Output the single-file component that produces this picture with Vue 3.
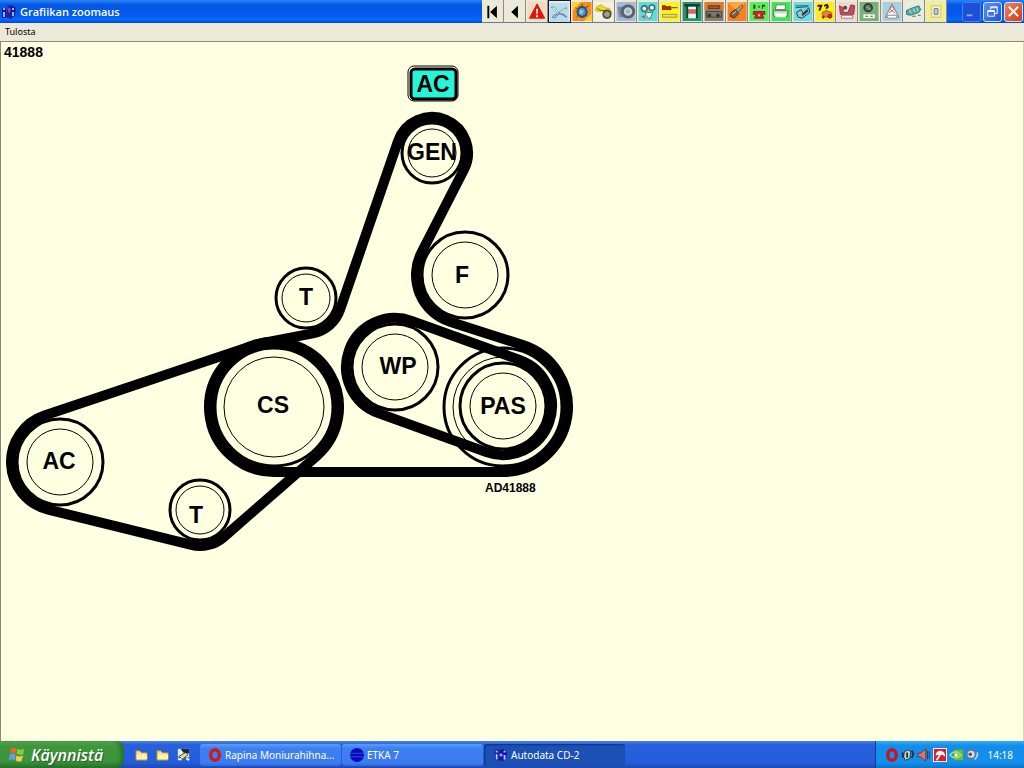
<script setup>
import { ref } from 'vue'

const pulleys = {
  gen: { label: 'GEN', x: 432, y: 153, r: 31, inner: 24, tx: 432, ty: 160 },
  f: { label: 'F', x: 465, y: 275, r: 44, inner: 33, tx: 462, ty: 283 },
  t1: { label: 'T', x: 306, y: 298, r: 31, inner: 24, tx: 306, ty: 305 },
  cs: { label: 'CS', x: 274, y: 407, r: 60, inner: 50, tx: 273, ty: 413 },
  wp: { label: 'WP', x: 395, y: 367, r: 44, inner: 33, tx: 398, ty: 374 },
  pasOuter: { label: '', x: 503, y: 407, r: 60, inner: 50 },
  pas: { label: 'PAS', x: 503, y: 406, r: 44, inner: 33, tx: 503, ty: 414 },
  ac: { label: 'AC', x: 60, y: 462, r: 44, inner: 33, tx: 59, ty: 469 },
  t2: { label: 'T', x: 200, y: 510, r: 31, inner: 24, tx: 196, ty: 523 }
}

// 1 = belt runs clockwise round the pulley, -1 = counter-clockwise
const routes = [
  [['gen', 1], ['f', -1], ['pasOuter', 1], ['cs', 1], ['t1', -1]],
  [['ac', 1], ['cs', 1], ['t2', 1]],
  [['wp', 1], ['pas', 1]]
]

function beltPath(route) {
  const nodes = route.map(([id, dir]) => {
    const p = pulleys[id]
    return { x: p.x, y: p.y, r: p.r + 5, dir }
  })
  const count = nodes.length
  const spans = nodes.map((from, i) => {
    const to = nodes[(i + 1) % count]
    const dx = to.x - from.x
    const dy = to.y - from.y
    const diff = from.dir * from.r - to.dir * to.r
    const angle = Math.atan2(dy, dx) + Math.asin(diff / Math.hypot(dx, dy))
    return { angle, start: touch(from, angle), end: touch(to, angle) }
  })
  let d = `M${spans[0].start}`
  spans.forEach((span, i) => {
    const next = spans[(i + 1) % count]
    const node = nodes[(i + 1) % count]
    const full = Math.PI * 2
    const turn = ((node.dir * (next.angle - span.angle)) % full + full) % full
    const large = turn > Math.PI ? 1 : 0
    const sweep = node.dir > 0 ? 1 : 0
    d += ` L${span.end} A${node.r} ${node.r} 0 ${large} ${sweep} ${next.start}`
  })
  return d + 'Z'
}

function touch(node, angle) {
  const r = node.dir * node.r
  return `${(node.x + r * Math.sin(angle)).toFixed(2)} ${(node.y - r * Math.cos(angle)).toFixed(2)}`
}

const belts = routes.map(beltPath)

const active = ref('Kytkentäkaaviot')

const tools = [
  { name: 'Ensimmäinen', bg: '#ece9d8', shapes: [{ d: 'M4 4h2v13H4z M14 4v13L7 10.5z', fill: '#000' }] },
  { name: 'Edellinen', bg: '#ece9d8', shapes: [{ d: 'M13 4v13L6 10.5z', fill: '#000' }] },
  { name: 'Varoitus', bg: '#f0dcc0', shapes: [
    { d: 'M10 2l8 15H2z', fill: '#e81010', stroke: '#b02010' },
    { d: 'M9 7h2l-.4 6h-1.2z M9 14h2v2H9z', fill: '#fff' }
  ] },
  { name: 'Kytkentäkaaviot', bg: '#b8dcec', shapes: [
    { d: 'M2 4l4 2 3 5 5 1 4 3 M18 5l-6 4-5 4-4 2', stroke: '#6c94a8', w: 2 },
    { d: 'M3 5l3 1 3 5 M11 10l6-4', stroke: '#f4ffff' },
    { d: 'M5 12l3 1-2 3-3-1z M13 12l4 2', fill: '#a8c0cc', stroke: '#7088a0' }
  ] },
  { name: 'Säätöarvot', bg: '#f88c18', shapes: [
    { d: 'M0 0h9L0 9z M20 20v-8l-8 8z', fill: '#ffd430' },
    { d: 'M7 6l3-1 3 1 2 4-1 4-4 2-4-2-1-4z', fill: '#3c98d0', stroke: '#285078', w: 2 },
    { d: 'M8 8l4 1-2 4-3-1z', fill: '#90c8e4' },
    { d: 'M3 6l3 2 M14 6l3-2 M10 2v3 M4 16l2-2', stroke: '#7c3820' }
  ] },
  { name: 'Jakohihna', bg: '#f4f0e4', shapes: [
    { d: 'M2 5l5-2 4 3 5 1 2 4-5 1-4-3-5 1-3-1z', fill: '#f4dc18', stroke: '#c8b010' },
    { d: 'M13 9a4 4 0 1 0 .1 0z', fill: '#a0a08c', stroke: '#505040', w: 2 },
    { d: 'M3 7l4 2 4 0', stroke: '#605818' }
  ] },
  { name: 'Renkaat', bg: '#a8b8d8', shapes: [
    { d: 'M1 5h8l3 2v9H3z', fill: '#7484a4' },
    { d: 'M12 4a6 6 0 1 0 .1 0z', fill: '#c4d0dc', stroke: '#58606c', w: 3 },
    { d: 'M12 8a2 2 0 1 0 .1 0z', fill: '#a0b0c0' }
  ] },
  { name: 'Hihnat', bg: '#60dcd8', shapes: [
    { d: 'M6 4a3 3 0 1 0 .1 0z M14 3a3 3 0 1 0 .1 0z', fill: '#f0f4ec', stroke: '#407878', w: 2 },
    { d: 'M7 11h8l-3 7-4-3z', fill: '#e4f4ec', stroke: '#407878' },
    { d: 'M3 15l3-1 1 4z', fill: '#e83030' }
  ] },
  { name: 'Sytytystulpat', bg: '#fcf420', shapes: [
    { d: 'M2 4h3v4H2z M6 5h5v3H6z M12 6h6', fill: '#d02818', stroke: '#802010' },
    { d: 'M2 13h15v3H2z', fill: '#e4d89c', stroke: '#a09428' }
  ] },
  { name: 'Nosturi', bg: '#249470', shapes: [
    { d: 'M2 2h16v3H2z M4 3h2v14H4z M14 3h2v14h-2z', fill: '#163c34' },
    { d: 'M6 5h8v3H6z M6 12h8v5H6z', fill: '#eef4e8' },
    { d: 'M6 8h8v4H6z', fill: '#e06060' }
  ] },
  { name: 'Ilmastointi', bg: '#8c8068', shapes: [
    { d: 'M0 0h20v8H0z', fill: '#e8782c' },
    { d: 'M4 4h12v3H4z', fill: '#8c6040', stroke: '#503820' },
    { d: 'M2 10h16v6H2z', fill: '#787870', stroke: '#444440' },
    { d: 'M5 12a2 2 0 1 0 .1 0z M14 12a2 2 0 1 0 .1 0z', fill: '#343434' }
  ] },
  { name: 'Anturit', bg: '#f88020', shapes: [
    { d: 'M0 0h20L8 8z', fill: '#f8a840' },
    { d: 'M3 12l5-4 4 4-5 5-4-2z', fill: '#786048', stroke: '#403428' },
    { d: 'M9 8l6-5 1 2-5 6z', fill: '#b0a494', stroke: '#605040' },
    { d: 'M5 13l4-3', stroke: '#e8d8b8' }
  ] },
  { name: 'Vikakoodit', bg: '#54f060', shapes: [
    { d: 'M4 3h2v4H4z M13 3h3v2h-2v2h-1z', fill: '#204820' },
    { d: 'M9 5h2', stroke: '#d82020', w: 2 },
    { d: 'M4 10h12v3h-3l2 4H5l2-4H4z', fill: '#d42424', stroke: '#a01818' },
    { d: 'M9 13h2v2H9z', fill: '#f8d8d0' }
  ] },
  { name: 'Tulostin', bg: '#38e854', shapes: [
    { d: 'M5 3h10l-1 5H4z', fill: '#fff', stroke: '#588058' },
    { d: 'M2 9h15v6H2z', fill: '#d0d8c8', stroke: '#508058' },
    { d: 'M4 12h11v4H4z', fill: '#fff' }
  ] },
  { name: 'Moottori', bg: '#70dce4', shapes: [
    { d: 'M2 4h14 M2 6l13-1', stroke: '#285464' },
    { d: 'M3 11l5-3 2 4 6-6 1 5-8 6-4-1z', fill: '#a4c4cc', stroke: '#183844' },
    { d: 'M9 14l6-5', stroke: '#183844', w: 2 }
  ] },
  { name: 'Vianhaku', bg: '#fcec24', shapes: [
    { d: 'M2 4h4L4 9 M9 4l3-1 1 2-2 2', stroke: '#28200c', w: 2 },
    { d: 'M7 11l4-2 6 2v4l-6 1-4-2z', fill: '#e4843c', stroke: '#b06020' },
    { d: 'M8 15a1 1 0 1 0 .1 0z M15 13a2 2 0 1 0 .1 0z', fill: '#d82020', stroke: '#802010' }
  ] },
  { name: 'Huolto', bg: '#ecd8d0', shapes: [
    { d: 'M2 4l4 2v5h5l3-8 4 1-1 9H3z', fill: '#c84c58', stroke: '#803c48' },
    { d: 'M8 4a2 2 0 1 0 .1 0z', fill: '#584048' },
    { d: 'M4 14h12v3H4z', fill: '#fff', stroke: '#a07078' }
  ] },
  { name: 'Jarrut', bg: '#78b078', shapes: [
    { d: 'M9 2a4 4 0 1 0 .1 0z', fill: '#687470', stroke: '#304038', w: 2 },
    { d: 'M7 5l5 3', stroke: '#a8b8a8' },
    { d: 'M4 13h12v4H4z', fill: '#f8fcf4' },
    { d: 'M6 15h3m2 0h3', stroke: '#506050' }
  ] },
  { name: 'Turvatyynyt', bg: '#a8d0e0', shapes: [
    { d: 'M10 2l7 14H3z', fill: '#f8f0f0', stroke: '#c05c68' },
    { d: 'M10 5a2 2 0 1 0 .1 0z M7 11l3-2 3 3', stroke: '#687888' },
    { d: 'M5 14h10v3H5z', fill: '#fff', stroke: '#789098' }
  ] },
  { name: 'Sähköosat', bg: '#e8ecdc', shapes: [
    { d: 'M2 9l4-2 9-3 2 4-2 3-9 3-4-1z', fill: '#54a8a8', stroke: '#387878' },
    { d: 'M5 8l2 4m2-5l2 4m2-5l1 4', stroke: '#d4ece4' },
    { d: 'M8 15h4m2-1h3', stroke: '#606c64' }
  ] },
  { name: 'Avaimet', bg: '#f4f080', shapes: [
    { d: 'M5 4h10v12H5z', fill: '#f0f0e0', stroke: '#c0c090' },
    { d: 'M8 7h4v6H8z', fill: '#c8c8c0', stroke: '#787870' }
  ] }
]

const tasks = [
  { name: 'Rapina Moniurahihna...', icon: 'opera' },
  { name: 'ETKA 7', icon: 'etka' },
  { name: 'Autodata CD-2', icon: 'autodata' }
]
const activeTask = ref('Autodata CD-2')
</script>

<template>
  <div class="desktop">
    <header class="titlebar">
      <svg class="app-icon" viewBox="0 0 16 16">
        <path d="M6 2l5-1 4 4-1 6-4 4-5-2z" fill="#2020a0" />
        <path d="M1 4h4v10H1z M10 3h4v9h-4z" fill="#101c98" />
        <path d="M2 4h2v2H2z M2 8h2v5H2z M11 4h2v2h-2z M11 8h2v4h-2z" fill="#90b4f4" />
        <path d="M6 3l4 2-2 5z" fill="#8448b0" />
      </svg>
      <h1>Grafiikan zoomaus</h1>
      <div class="toolbar">
        <button
          v-for="tool in tools"
          :key="tool.name"
          class="tool"
          :class="{ active: active === tool.name }"
          :aria-label="tool.name"
          @click="active = tool.name"
        >
          <svg viewBox="0 0 20 20">
            <rect width="20" height="20" :fill="tool.bg" />
            <path
              v-for="(s, i) in tool.shapes"
              :key="i"
              :d="s.d"
              :fill="s.fill || 'none'"
              :stroke="s.stroke || 'none'"
              :stroke-width="s.w || 1"
            />
          </svg>
        </button>
      </div>
      <div class="window-buttons">
        <button class="win dim" aria-label="Pienennä">
          <svg viewBox="0 0 18 18"><path d="M4 13h6" stroke="#8cacf4" stroke-width="2" /></svg>
        </button>
        <button class="win" aria-label="Palauta">
          <svg viewBox="0 0 18 18">
            <path d="M7 7V4h7v7h-3 M7 5h7" fill="none" stroke="#fff" />
            <path d="M4 8h7v6H4z M4 9h7" fill="none" stroke="#fff" />
          </svg>
        </button>
        <button class="win close" aria-label="Sulje">
          <svg viewBox="0 0 18 18"><path d="M4 4l10 10M14 4L4 14" stroke="#fff" stroke-width="2" /></svg>
        </button>
      </div>
    </header>

    <nav class="menubar">
      <button class="menu-item">Tulosta</button>
    </nav>

    <main class="content">
      <h2>41888</h2>
      <svg class="diagram" viewBox="0 63 600 500" width="600" height="500">
        <g fill="none" stroke="#000">
          <g v-for="(p, id) in pulleys" :key="id">
            <circle :cx="p.x" :cy="p.y" :r="p.r - 1" stroke-width="3" fill="#ffffe1" />
            <circle :cx="p.x" :cy="p.y" :r="p.inner" stroke-width="1" />
          </g>
          <path v-for="(d, i) in belts" :key="i" :d="d" stroke-width="10" />
        </g>
        <rect x="408" y="66" width="50" height="35" rx="6" fill="#ffffe1" stroke="#000" />
        <rect x="411" y="69" width="45" height="30" rx="4" fill="#28f4d8" stroke="#000" stroke-width="3" />
        <g class="labels">
          <text x="433" y="92">AC</text>
          <text v-for="(p, id) in pulleys" :key="id" :x="p.tx" :y="p.ty">{{ p.label }}</text>
        </g>
        <text class="caption" x="485" y="492">AD41888</text>
      </svg>
    </main>

    <footer class="taskbar">
      <button class="start">
        <svg viewBox="0 0 20 20">
          <path d="M3 4q3-2 6 0l-1 5q-3-2-6 0z" fill="#f06030" />
          <path d="M10 4q3 2 7 0l-1 6q-4 1-7-1z" fill="#88cc40" />
          <path d="M2 10q3-2 6 0l-1 6q-3-2-6 0z" fill="#60a0f0" />
          <path d="M9 11q3 2 7 0l-2 6q-3 1-6-1z" fill="#fcd038" />
        </svg>
        <span>Käynnistä</span>
      </button>
      <div class="quick-launch">
        <button v-for="n in 2" :key="n" class="quick" aria-label="Kansio">
          <svg viewBox="0 0 16 16">
            <path d="M2 4h4l2 2h6v8H2z" fill="#f8e08c" stroke="#a08030" />
            <path d="M3 8h11v5H3z" fill="#fff4b0" />
          </svg>
        </button>
        <button class="quick" aria-label="Näytä työpöytä">
          <svg viewBox="0 0 16 16">
            <path d="M2 2h12v9H2z" fill="#e4ecf4" />
            <path d="M5 2h9v5l-6-1z" fill="#202830" />
            <path d="M3 10l7-4 3 2-6 5z" fill="#e8e080" stroke="#404030" />
            <path d="M2 13h4m5-1l3 2" stroke="#fff" stroke-width="2" />
          </svg>
        </button>
      </div>
      <div class="tasks">
        <button
          v-for="task in tasks"
          :key="task.name"
          class="task"
          :class="{ active: activeTask === task.name }"
          @click="activeTask = task.name"
        >
          <svg v-if="task.icon === 'opera'" viewBox="0 0 16 16">
            <ellipse cx="8" cy="8" rx="5" ry="6" fill="none" stroke="#d01820" stroke-width="4" />
          </svg>
          <svg v-else-if="task.icon === 'etka'" viewBox="0 0 16 16">
            <circle cx="8" cy="8" r="8" fill="#0808c0" />
            <path d="M0 6h16M0 10h16" stroke="#2c58d8" />
          </svg>
          <svg v-else viewBox="0 0 16 16">
            <path d="M6 2l5-1 4 4-1 6-4 4-5-2z" fill="#1414b0" />
            <path d="M1 2h4v12H1z" fill="#101c98" />
            <path d="M2 3h2v2H2z M2 7h2v6H2z M11 3h2v2h-2z M11 8h2v5h-2z" fill="#b8d4ff" />
            <path d="M6 8h4M8 6v4" stroke="#e0d8ff" />
          </svg>
          <span>{{ task.name }}</span>
        </button>
      </div>
      <div class="tray">
        <div class="tray-icons">
          <svg viewBox="0 0 16 16">
            <ellipse cx="8" cy="8" rx="5" ry="6" fill="none" stroke="#c81424" stroke-width="4" />
          </svg>
          <svg viewBox="0 0 16 16">
            <path d="M4 4l5-2 2 3-1 7-5 2-2-4z" fill="#d0d0c8" stroke="#242c34" />
            <path d="M12 3q4 4 0 8M7 5v6M2 5v6" fill="none" stroke="#242c34" stroke-width="2" />
          </svg>
          <svg viewBox="0 0 16 16">
            <path d="M1 6h3l6-5v14l-6-5H1z" fill="#e87060" stroke="#603038" />
            <path d="M12 3v10M14 4v8" stroke="#30384c" />
          </svg>
          <svg viewBox="0 0 16 16">
            <rect width="16" height="16" rx="1" fill="#fff" />
            <rect x="1" y="1" width="14" height="14" fill="#d82028" />
            <path d="M3 9Q3 3 9 3q5 1 5 7-3-3-6-2-3-1-5 1z" fill="#fff" />
            <path d="M8 8l-4 6" stroke="#fff" stroke-width="2" />
          </svg>
          <svg viewBox="0 0 16 16">
            <rect x="6" y="2" width="10" height="12" fill="#6cc024" />
            <path d="M1 8q6-7 13 0-7 6-13 0z" fill="none" stroke="#a0dc70" stroke-width="2" />
            <circle cx="8" cy="8" r="2" fill="#e8f8d8" />
          </svg>
          <svg viewBox="0 0 16 16">
            <circle cx="7" cy="7" r="5" fill="#d4dce4" stroke="#68788c" stroke-width="2" />
            <circle cx="6" cy="7" r="2" fill="#405870" />
            <path d="M11 13q4-3 3-8" fill="none" stroke="#b0d0f0" stroke-width="2" />
          </svg>
        </div>
        <time>14:18</time>
      </div>
    </footer>
  </div>
</template>

<style>
body {
  margin: 0;
  background: #ffffe1;
}
</style>

<style scoped>
.desktop {
  display: flex;
  flex-direction: column;
  min-height: 100vh;
  font-family: "Noto Sans", "Open Sans", sans-serif;
  color: #000;
}

button {
  margin: 0;
  padding: 0;
  border: none;
  background: none;
  font: inherit;
  color: inherit;
}

svg {
  display: block;
}

.titlebar {
  display: flex;
  align-items: center;
  height: 23px;
  background: linear-gradient(#2c84f8 0%, #0458e4 20%, #0458ec 60%, #0468fc 85%, #0448cc 100%);
}

.app-icon {
  width: 16px;
  height: 16px;
  margin-left: 1px;
}

h1 {
  flex: 1;
  margin: 0 0 0 3px;
  font-family: "Open Sans", "Noto Sans", sans-serif;
  font-size: 11px;
  line-height: 22px;
  font-weight: 600;
  color: #fff;
}

.toolbar {
  display: flex;
  width: 465px;
}

.tool {
  flex: 1;
  min-width: 0;
  height: 23px;
  padding: 2px 0 1px 1px;
  box-sizing: border-box;
  background: #ece9d8;
  border-right: 1px solid #8c8c84;
  border-bottom: 1px solid #68789c;
}

.tool svg {
  width: 100%;
  height: 19px;
}

.tool.active {
  padding: 1px 0 0;
  border: 1px solid #101c48;
}

.window-buttons {
  display: flex;
  gap: 2px;
  margin: 0 1px 0 15px;
}

.win {
  width: 19px;
  height: 20px;
  box-sizing: border-box;
  border: 1px solid #d8e4fc;
  border-radius: 3px;
  background: linear-gradient(135deg, #5c90f4, #1c54dc);
}

.win.dim {
  border-color: #4c80ec;
  background: #1c50d8;
}

.win.close {
  background: linear-gradient(135deg, #f08460, #d03c14);
}

.menubar {
  display: flex;
  align-items: flex-start;
  height: 18px;
  background: #ece9d8;
  border-bottom: 1px solid #8c8878;
}

.menu-item {
  padding: 0 5px;
  font-size: 9px;
  line-height: 17px;
}

.content {
  flex: 1;
  border-left: 1px solid #8c8878;
  border-right: 1px solid #d8d4c4;
  background: #ffffe1;
}

h2 {
  margin: 0;
  padding-left: 3px;
  font-family: "Liberation Sans", Arial, sans-serif;
  font-size: 14px;
  line-height: 21px;
}

.diagram {
  max-width: 100%;
  margin-left: -1px;
}

.labels {
  font: bold 23px "Liberation Sans", Arial, sans-serif;
  text-anchor: middle;
}

.caption {
  font: bold 12px "Liberation Sans", Arial, sans-serif;
}

.taskbar {
  display: flex;
  height: 27px;
  background: linear-gradient(#4484ec 0%, #2860dc 14%, #245cdc 80%, #1c48b0 100%);
  color: #fff;
  font-size: 10px;
}

.start {
  display: flex;
  align-items: center;
  gap: 4px;
  width: 124px;
  padding-left: 8px;
  border-radius: 0 8px 8px 0;
  background: linear-gradient(#68b464 0%, #3c9838 18%, #3c943c 75%, #287428 100%);
  box-shadow: inset -3px 0 4px #246c28;
  font-family: "Open Sans", "Noto Sans", sans-serif;
  font-size: 16px;
  font-weight: 600;
  font-style: italic;
  text-shadow: 1px 1px 1px #285828;
}

.start svg {
  width: 19px;
  height: 19px;
}

.quick-launch {
  display: flex;
  align-items: center;
  gap: 6px;
  width: 76px;
  padding-left: 10px;
  box-sizing: border-box;
}

.quick svg {
  width: 15px;
  height: 15px;
}

.tasks {
  display: flex;
  flex: 1;
  gap: 1px;
  padding: 3px 0 2px;
}

.task {
  display: flex;
  align-items: center;
  gap: 3px;
  width: 141px;
  padding-left: 8px;
  box-sizing: border-box;
  border-radius: 3px;
  background: linear-gradient(#5c9cfc 0%, #3c80f0 20%, #3c7cf0 85%, #3068d8 100%);
}

.task.active {
  padding-left: 10px;
  background: #1c50b4;
  box-shadow: inset 1px 1px 2px #103080;
}

.task svg {
  width: 14px;
  height: 14px;
}

.tray {
  display: flex;
  align-items: center;
  gap: 8px;
  padding: 0 11px 0 9px;
  border-left: 1px solid #103c90;
  background: linear-gradient(#30b0f4 0%, #148cec 18%, #1490ec 80%, #1070c4 100%);
}

.tray-icons {
  display: flex;
  gap: 2px;
}

.tray-icons svg {
  width: 14px;
  height: 14px;
}
</style>
